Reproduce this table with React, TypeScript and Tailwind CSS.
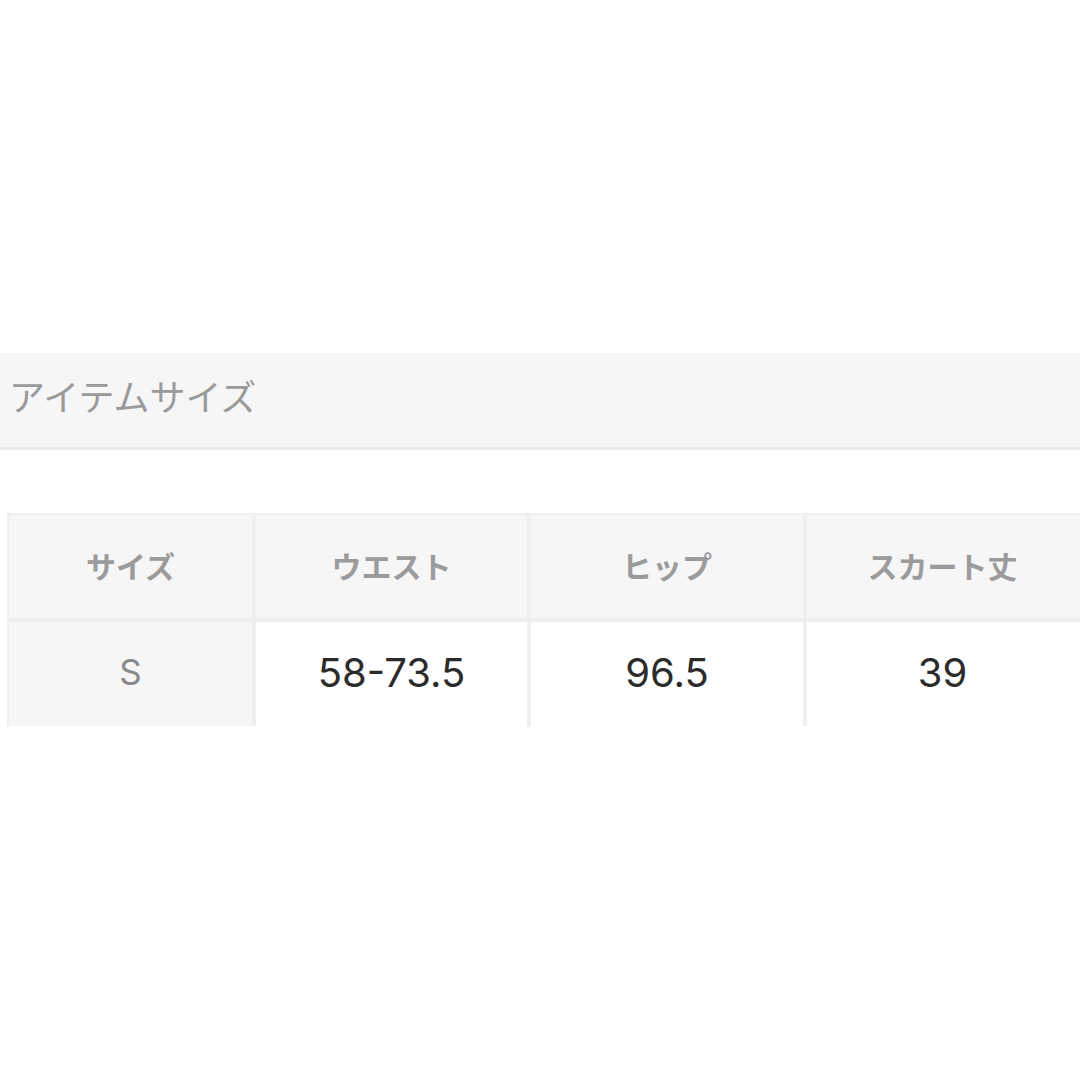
const headers = ['サイズ', 'ウエスト', 'ヒップ', 'スカート丈']
const values = ['58-73.5', '96.5', '39']

const jp = '[font-family:"Noto_Sans_CJK_JP","Noto_Sans",sans-serif]'

export default function App() {
  return (
    <div className="min-h-[1080px] w-[1080px] overflow-hidden bg-white pt-[353px]">
      {/* section title */}
      <div className="flex h-[97px] items-center border-b-[3px] border-[#ececec] bg-[#f6f6f6] pb-[10px] pl-[9px]">
        <span className={`${jp} text-[36px] leading-none text-[#9a9a9a]`}>アイテムサイズ</span>
      </div>

      {/* size table */}
      <div className="ml-[7px] mt-[63px] w-[1100px]">
        <div className="grid grid-cols-[243px_271px_272px_320px] gap-[4px] bg-[#efefef] pl-[2px] pt-[2px]">
          {headers.map((h, i) => (
            <div
              key={h}
              className={`flex h-[103px] items-center justify-center bg-[#f6f6f6] pb-[3px] ${i === 3 ? 'pr-[49px]' : ''}`}
            >
              <span className={`${jp} text-[30px] font-bold leading-none text-[#9b9b9b]`}>{h}</span>
            </div>
          ))}
          <div className="flex h-[104px] items-center justify-center bg-[#f6f6f6] pb-[3px]">
            <span className="font-['Inter',sans-serif] text-[35px] leading-none text-[#8a8a8a]">S</span>
          </div>
          {values.map((v, i) => (
            <div
              key={v}
              className={`flex h-[104px] items-center justify-center bg-white pb-[3px] ${i === 2 ? 'pr-[49px]' : ''}`}
            >
              <span className="font-['Inter',sans-serif] text-[40px] leading-none text-[#2b2b2b]">{v}</span>
            </div>
          ))}
        </div>
      </div>
    </div>
  )
}
